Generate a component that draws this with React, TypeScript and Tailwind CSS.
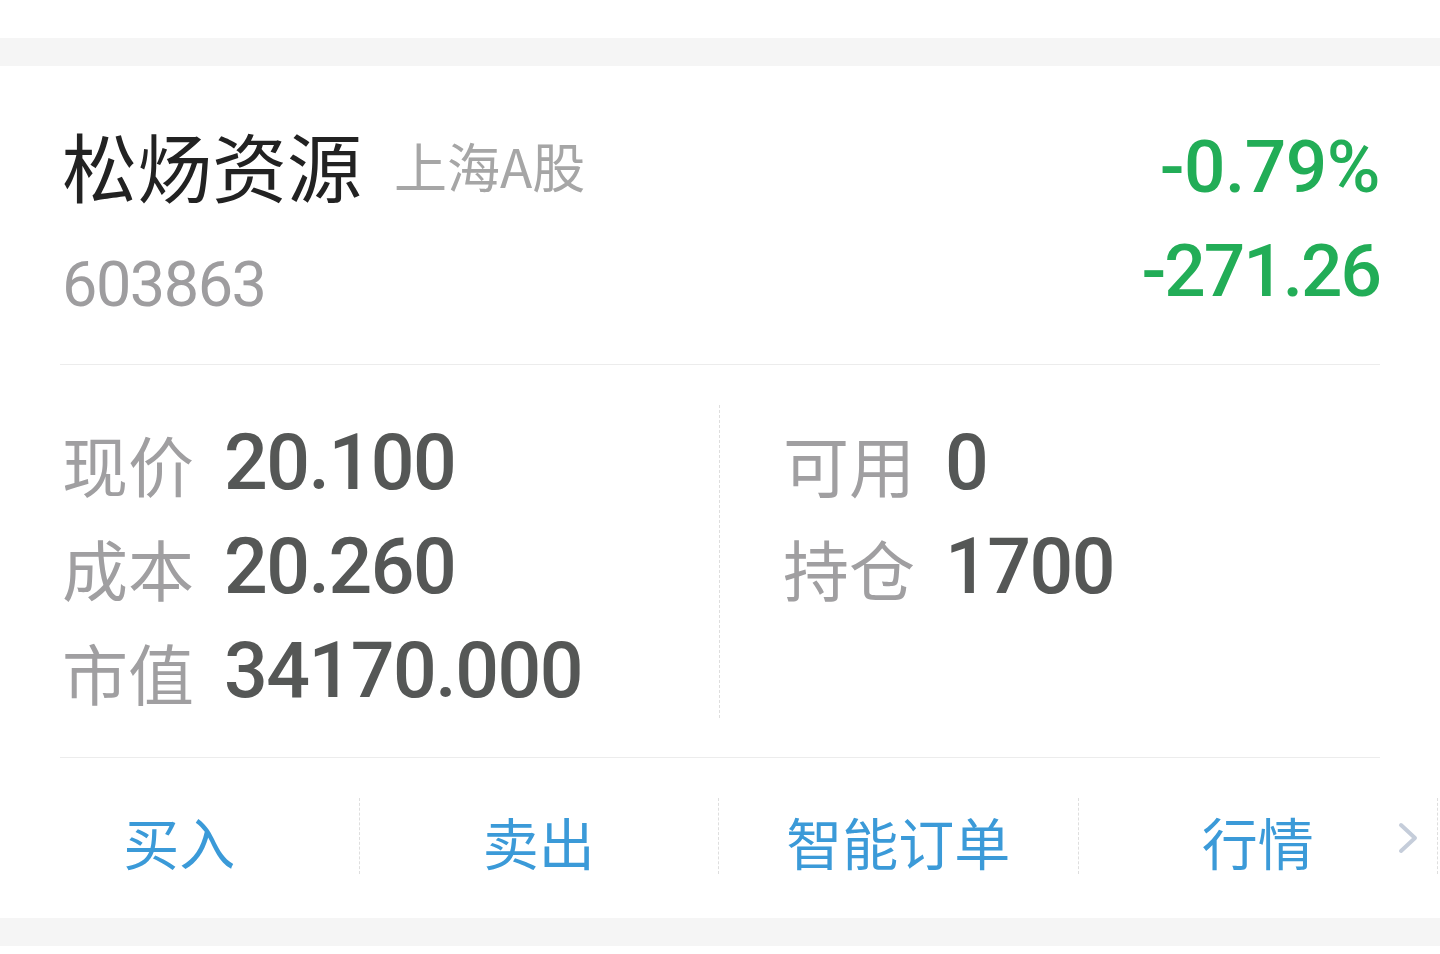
const cjk = "font-['Noto_Sans_CJK_SC','Noto_Sans',sans-serif]";
const num = "font-['Roboto','Noto_Sans_CJK_SC',sans-serif]";

const leftStats = [
  { label: '现价', value: '20.100' },
  { label: '成本', value: '20.260' },
  { label: '市值', value: '34170.000' },
];

const rightStats = [
  { label: '可用', value: '0' },
  { label: '持仓', value: '1700' },
];

const actions = ['买入', '卖出', '智能订单', '行情'];

function StatRow({ label, value }: { label: string; value: string }) {
  return (
    <div className="flex items-center h-[104px]">
      <span className={`${cjk} text-[66px] leading-[104px] text-[#a09fa1]`}>{label}</span>
      <span className={`${num} ml-[30px] text-[77px] leading-[104px] font-medium text-[#555756] tracking-[-1.5px]`}>
        {value}
      </span>
    </div>
  );
}

function Chevron() {
  return (
    <svg width="22" height="34" viewBox="0 0 22 34" fill="none">
      <polyline
        points="4,4 18,17 4,30"
        stroke="#c5cdda"
        strokeWidth="4"
        strokeLinecap="round"
        strokeLinejoin="round"
      />
    </svg>
  );
}

export default function App() {
  return (
    <div className="w-[1440px] h-[954px] bg-white overflow-hidden">
      <div className="h-[38px]" />
      <div className="h-[28px] bg-[#f5f5f5]" />

      {/* position card */}
      <div className="h-[852px] bg-white">
        <div className="mx-[60px] h-[299px] border-b border-[#ececec] pl-[2px] pt-[49px] flex justify-between">
          <div>
            <div className="flex items-center h-[100px]">
              <span className={`${cjk} text-[75px] leading-[100px] text-[#222222]`}>松炀资源</span>
              <span className={`${cjk} ml-[32px] text-[53px] leading-[100px] text-[#a6a6a6]`}>上海A股</span>
            </div>
            <div className={`${num} mt-[30px] text-[63px] leading-[80px] text-[#9e9d9f] tracking-[-1.5px]`}>
              603863
            </div>
          </div>
          <div className={`${num} text-right font-medium text-[73px] leading-[104px] text-[#22ad57]`}>
            <div className="tracking-[-0.5px]">-0.79%</div>
            <div className="tracking-[-2px]">-271.26</div>
          </div>
        </div>

        <div className="mx-[60px] h-[393px] border-b border-[#ececec] pt-[40px]">
          <div className="flex">
            <div className="w-[660px] h-[313px] border-r border-dashed border-[#dedede] pl-[2px] pt-[6px]">
              {leftStats.map((s) => (
                <StatRow key={s.label} label={s.label} value={s.value} />
              ))}
            </div>
            <div className="flex-1 pl-[63px] pt-[6px]">
              {rightStats.map((s) => (
                <StatRow key={s.label} label={s.label} value={s.value} />
              ))}
            </div>
          </div>
        </div>

        <div className="w-[1438px] h-[160px] flex items-center">
          {actions.map((a, i) => (
            <div key={a} className="flex-1 h-full flex items-center">
              <div className="flex-1 h-full grid grid-cols-[1fr_auto_1fr] items-center pt-[6px]">
                <span />
                <span className={`${cjk} text-[56px] leading-[70px] text-[#3b9ad8]`}>{a}</span>
                <span className="flex justify-end pr-[18px] pb-[6px]">{i === actions.length - 1 && <Chevron />}</span>
              </div>
              <div className="w-px h-[76px] mb-[4px] border-l border-dashed border-[#dedede]" />
            </div>
          ))}
        </div>
      </div>

      <div className="h-[28px] bg-[#f5f5f5]" />
    </div>
  );
}
